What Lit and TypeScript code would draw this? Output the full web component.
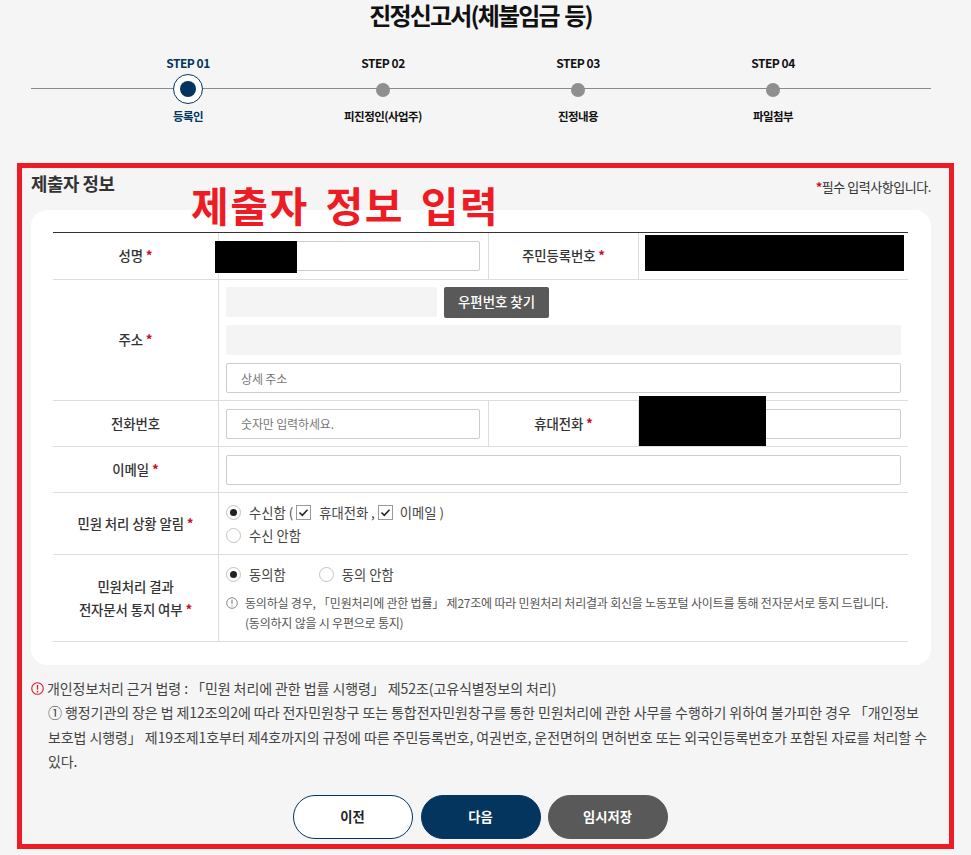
import { LitElement, html, css } from "lit";
import { customElement } from "lit/decorators.js";

const check = html`<svg class="cbicon" viewBox="0 0 15 15" width="15" height="15"><rect x=".5" y=".5" width="14" height="14" fill="#fff" stroke="#9a9a9a"/><path d="M3.5 7.5 6.3 10.3 11.5 4.8" fill="none" stroke="#222" stroke-width="1.5"/></svg>`;
const alert = (c: string, s: number, w: number) => html`<svg class="alert" viewBox="0 0 14 14" width="${s}" height="${s}"><circle cx="7" cy="7" r="6.2" fill="none" stroke="${c}" stroke-width="${w}"/><path d="M7 3.2V8.2" stroke="${c}" stroke-width="${w + 0.2}" fill="none"/><circle cx="7" cy="10.3" r="${w * 0.75}" fill="${c}"/></svg>`;

@customElement("app-root")
export class AppRoot extends LitElement {
  static styles = css`
    :host { display: block; position: relative; width: 971px; height: 855px; overflow: hidden; background: #f5f5f5; color: #222;
      font-family: "Noto Sans CJK KR", "Noto Sans", sans-serif; font-size: 14px; }
    * { box-sizing: border-box; }
    h1 { margin: 0; height: 55px; padding-right: 10px; text-align: center; font-size: 24px; line-height: 30px; font-weight: 700; letter-spacing: -1.85px; word-spacing: 2px; color: #111; }
    .stepper { position: relative; margin-left: 31px; width: 900px; height: 108px; display: flex; padding-left: 59.5px; }
    .stepper::before { content: ""; position: absolute; left: 0; right: 0; top: 33px; height: 1px; background: #8a8a8a; }
    .step { position: relative; width: 195px; margin-top: -1px; display: flex; flex-direction: column; align-items: center; }
    .step-no { height: 18px; line-height: 18px; font-size: 12px; font-weight: 700; letter-spacing: -0.5px; color: #111; }
    .dotwrap { height: 32px; display: flex; align-items: center; justify-content: center; }
    .dot { width: 14px; height: 14px; border-radius: 50%; background: #8f8f8f; margin-top: 4px; }
    .step.on .dot { width: 30px; height: 30px; margin-top: 2px; border: 1px solid #03355f; background: #fff; display: flex; align-items: center; justify-content: center; }
    .step.on .dot::after { content: ""; width: 16px; height: 16px; border-radius: 50%; background: #03355f; }
    .step-label { margin-top: 3px; height: 18px; line-height: 18px; font-size: 11.5px; font-weight: 700; letter-spacing: -0.55px; color: #111; white-space: nowrap; }
    .step.on .step-no, .step.on .step-label { color: #03355f; }
    .head { margin: 0 40px 0 31px; height: 47px; display: flex; justify-content: space-between; align-items: flex-start; }
    .head h2 { margin: 0; font-size: 17.8px; line-height: 24px; font-weight: 700; letter-spacing: -0.4px; color: #333; padding-top: 8px; box-sizing: content-box; }
    .req { font-size: 13px; line-height: 18px; padding-top: 15px; letter-spacing: -0.45px; color: #333; }
    .req b, .star { color: #c8102e; font-weight: 700; }
    .card { margin: 0 40px 0 31px; height: 455px; background: #fff; border-radius: 16px; padding: 22px 23px 0 22px; }
    .table { display: grid; grid-template-columns: 165px 270px 150px 270px; grid-template-rows: 47px 121px 46px 46px 62px 87px; border-top: 1px solid #333; }
    .th, .td { border-bottom: 1px solid #ddd; display: flex; align-items: center; }
    .th { justify-content: center; text-align: center; font-size: 13.4px; font-weight: 500; line-height: 23px; padding-bottom: 1px; color: #333; letter-spacing: -0.1px; }
    .td { border-left: 1px solid #ddd; padding: 0 7px; }
    .td.narrow { padding-right: 8px; }
    .th.ml { border-left: 1px solid #ddd; }
    .td.wide { grid-column: 2 / span 3; }
    .td.stack { flex-direction: column; align-items: stretch; }
    input { display: block; width: 100%; height: 30px; border: 1px solid #ccc; border-radius: 2px; background: #fff; padding: 0 14px; font: inherit; font-size: 12px; letter-spacing: -0.15px; color: #333; outline: none; }
    input::placeholder { color: #777; opacity: 1; }
    .gray { height: 30px; background: #f4f4f4; border-radius: 2px; }
    .addr { padding-top: 7px; gap: 8px; justify-content: flex-start; }
    .zip { display: flex; gap: 7px; height: 30px; align-items: flex-start; }
    .zip .gray { width: 211px; }
    .zipbtn { width: 105px; height: 31px; border: 0; border-radius: 2px; background: #595959; color: #fff; font: inherit; font-size: 13.4px; font-weight: 500; padding: 0 0 4px; flex: none; }
    .opts { padding: 1px 7px 0; font-size: 13.3px; color: #444; line-height: 23px; justify-content: center; }
    .line { display: flex; align-items: center; height: 23px; white-space: nowrap; }
    .radio { width: 15px; height: 15px; border-radius: 50%; border: 1px solid #c4c4c4; background: #fff; display: flex; align-items: center; justify-content: center; margin-right: 8px; flex: none; }
    .radio.on::after { content: ""; width: 7px; height: 7px; border-radius: 50%; background: #222; }
    .cbicon { flex: none; display: block; }
    .phone-check { margin-left: 3px; margin-right: 8px; }
    .mail-check { margin-left: 3px; margin-right: 7px; }
    .consent { justify-content: flex-start; padding-top: 8px; }
    .next { margin-left: 33px; }
    .info { display: flex; margin-top: 7px; font-size: 12px; line-height: 20px; color: #555; letter-spacing: -0.21px; white-space: nowrap; }
    .info .slot { width: 19px; flex: none; display: flex; align-items: center; height: 20px; }
    .alert { display: block; flex: none; }
    .notice { margin: 11px 40px 0 31px; font-size: 14px; line-height: 24.4px; color: #444; letter-spacing: -0.08px; word-break: keep-all; }
    .notice p { margin: 0; }
    .notice .first { display: flex; align-items: center; gap: 3px; white-space: nowrap; }
    .notice .indent { padding-left: 17px; width: 915px; }
    .btns { margin-top: 21px; display: flex; justify-content: center; gap: 8px; margin-left: -11px; }
    .btn { width: 120px; height: 44px; border-radius: 22px; border: 1px solid #03355f; background: #fff; color: #222; font: inherit; font-size: 13.3px; font-weight: 700; padding: 0; }
    .btn.navy { background: #03355f; color: #fff; }
    .btn.dark { background: #595959; border-color: #595959; color: #fff; margin-left: -1px; }
    .frame { position: absolute; left: 17px; top: 163px; width: 937px; height: 686px; border: 5px solid #ed1c24; pointer-events: none; }
    .callout { position: absolute; left: 191px; top: 177px; font-size: 41px; line-height: 54px; font-weight: 700; color: #ed1c24; letter-spacing: 1.5px; word-spacing: 6px; white-space: nowrap; }
    .mask { position: absolute; background: #000; }
    .mask.a { left: 215px; top: 241px; width: 82px; height: 32px; }
    .mask.b { left: 645px; top: 235px; width: 259px; height: 36px; }
    .mask.c { left: 639px; top: 396px; width: 127px; height: 50px; }
  `;

  render() {
    const steps = [["STEP 01", "등록인"], ["STEP 02", "피진정인(사업주)"], ["STEP 03", "진정내용"], ["STEP 04", "파일첨부"]];
    return html`
      <h1>진정신고서(체불임금 등)</h1>
      <div class="stepper">
        ${steps.map(([n, l], i) => html`
          <div class="step ${i === 0 ? "on" : ""}">
            <div class="step-no">${n}</div>
            <div class="dotwrap"><div class="dot"></div></div>
            <div class="step-label">${l}</div>
          </div>`)}
      </div>
      <div class="head">
        <h2>제출자 정보</h2>
        <div class="req"><b>*</b>필수 입력사항입니다.</div>
      </div>
      <div class="card">
        <div class="table">
          <div class="th">성명&nbsp;<span class="star">*</span></div>
          <div class="td narrow"><input /></div>
          <div class="th ml">주민등록번호&nbsp;<span class="star">*</span></div>
          <div class="td"></div>

          <div class="th">주소&nbsp;<span class="star">*</span></div>
          <div class="td wide stack addr">
            <div class="zip"><div class="gray"></div><button class="zipbtn">우편번호 찾기</button></div>
            <div class="gray"></div>
            <input placeholder="상세 주소" />
          </div>

          <div class="th">전화번호</div>
          <div class="td narrow"><input placeholder="숫자만 입력하세요." /></div>
          <div class="th ml">휴대전화&nbsp;<span class="star">*</span></div>
          <div class="td"><input /></div>

          <div class="th">이메일&nbsp;<span class="star">*</span></div>
          <div class="td wide"><input /></div>

          <div class="th">민원 처리 상황 알림&nbsp;<span class="star">*</span></div>
          <div class="td wide stack opts">
            <div class="line"><span class="radio on"></span>수신함 (<span class="phone-check">${check}</span>휴대전화 ,<span class="mail-check">${check}</span>이메일 )</div>
            <div class="line"><span class="radio"></span>수신 안함</div>
          </div>

          <div class="th"><div>민원처리 결과<br />전자문서 통지 여부&nbsp;<span class="star">*</span></div></div>
          <div class="td wide stack opts consent">
            <div class="line"><span class="radio on"></span>동의함<span class="next"></span><span class="radio"></span>동의 안함</div>
            <div class="info"><span class="slot">${alert("#666", 12, 0.9)}</span><div>동의하실 경우, 「민원처리에 관한 법률」 제27조에 따라 민원처리 처리결과 회신을 노동포털 사이트를 통해 전자문서로 통지 드립니다.<br />(동의하지 않을 시 우편으로 통지)</div></div>
          </div>
        </div>
      </div>
      <div class="notice">
        <p class="first">${alert("#d9202a", 13, 1.2)}개인정보처리 근거 법령 : 「민원 처리에 관한 법률 시행령」 제52조(고유식별정보의 처리)</p>
        <p class="indent">① 행정기관의 장은 법 제12조의2에 따라 전자민원창구 또는 통합전자민원창구를 통한 민원처리에 관한 사무를 수행하기 위하여 불가피한 경우 「개인정보 보호법 시행령」 제19조제1호부터 제4호까지의 규정에 따른 주민등록번호, 여권번호, 운전면허의 면허번호 또는 외국인등록번호가 포함된 자료를 처리할 수 있다.</p>
      </div>
      <div class="btns">
        <button class="btn">이전</button>
        <button class="btn navy">다음</button>
        <button class="btn dark">임시저장</button>
      </div>
      <div class="mask a"></div><div class="mask b"></div><div class="mask c"></div>
      <div class="frame"></div>
      <div class="callout">제출자 정보 입력</div>
    `;
  }
}
